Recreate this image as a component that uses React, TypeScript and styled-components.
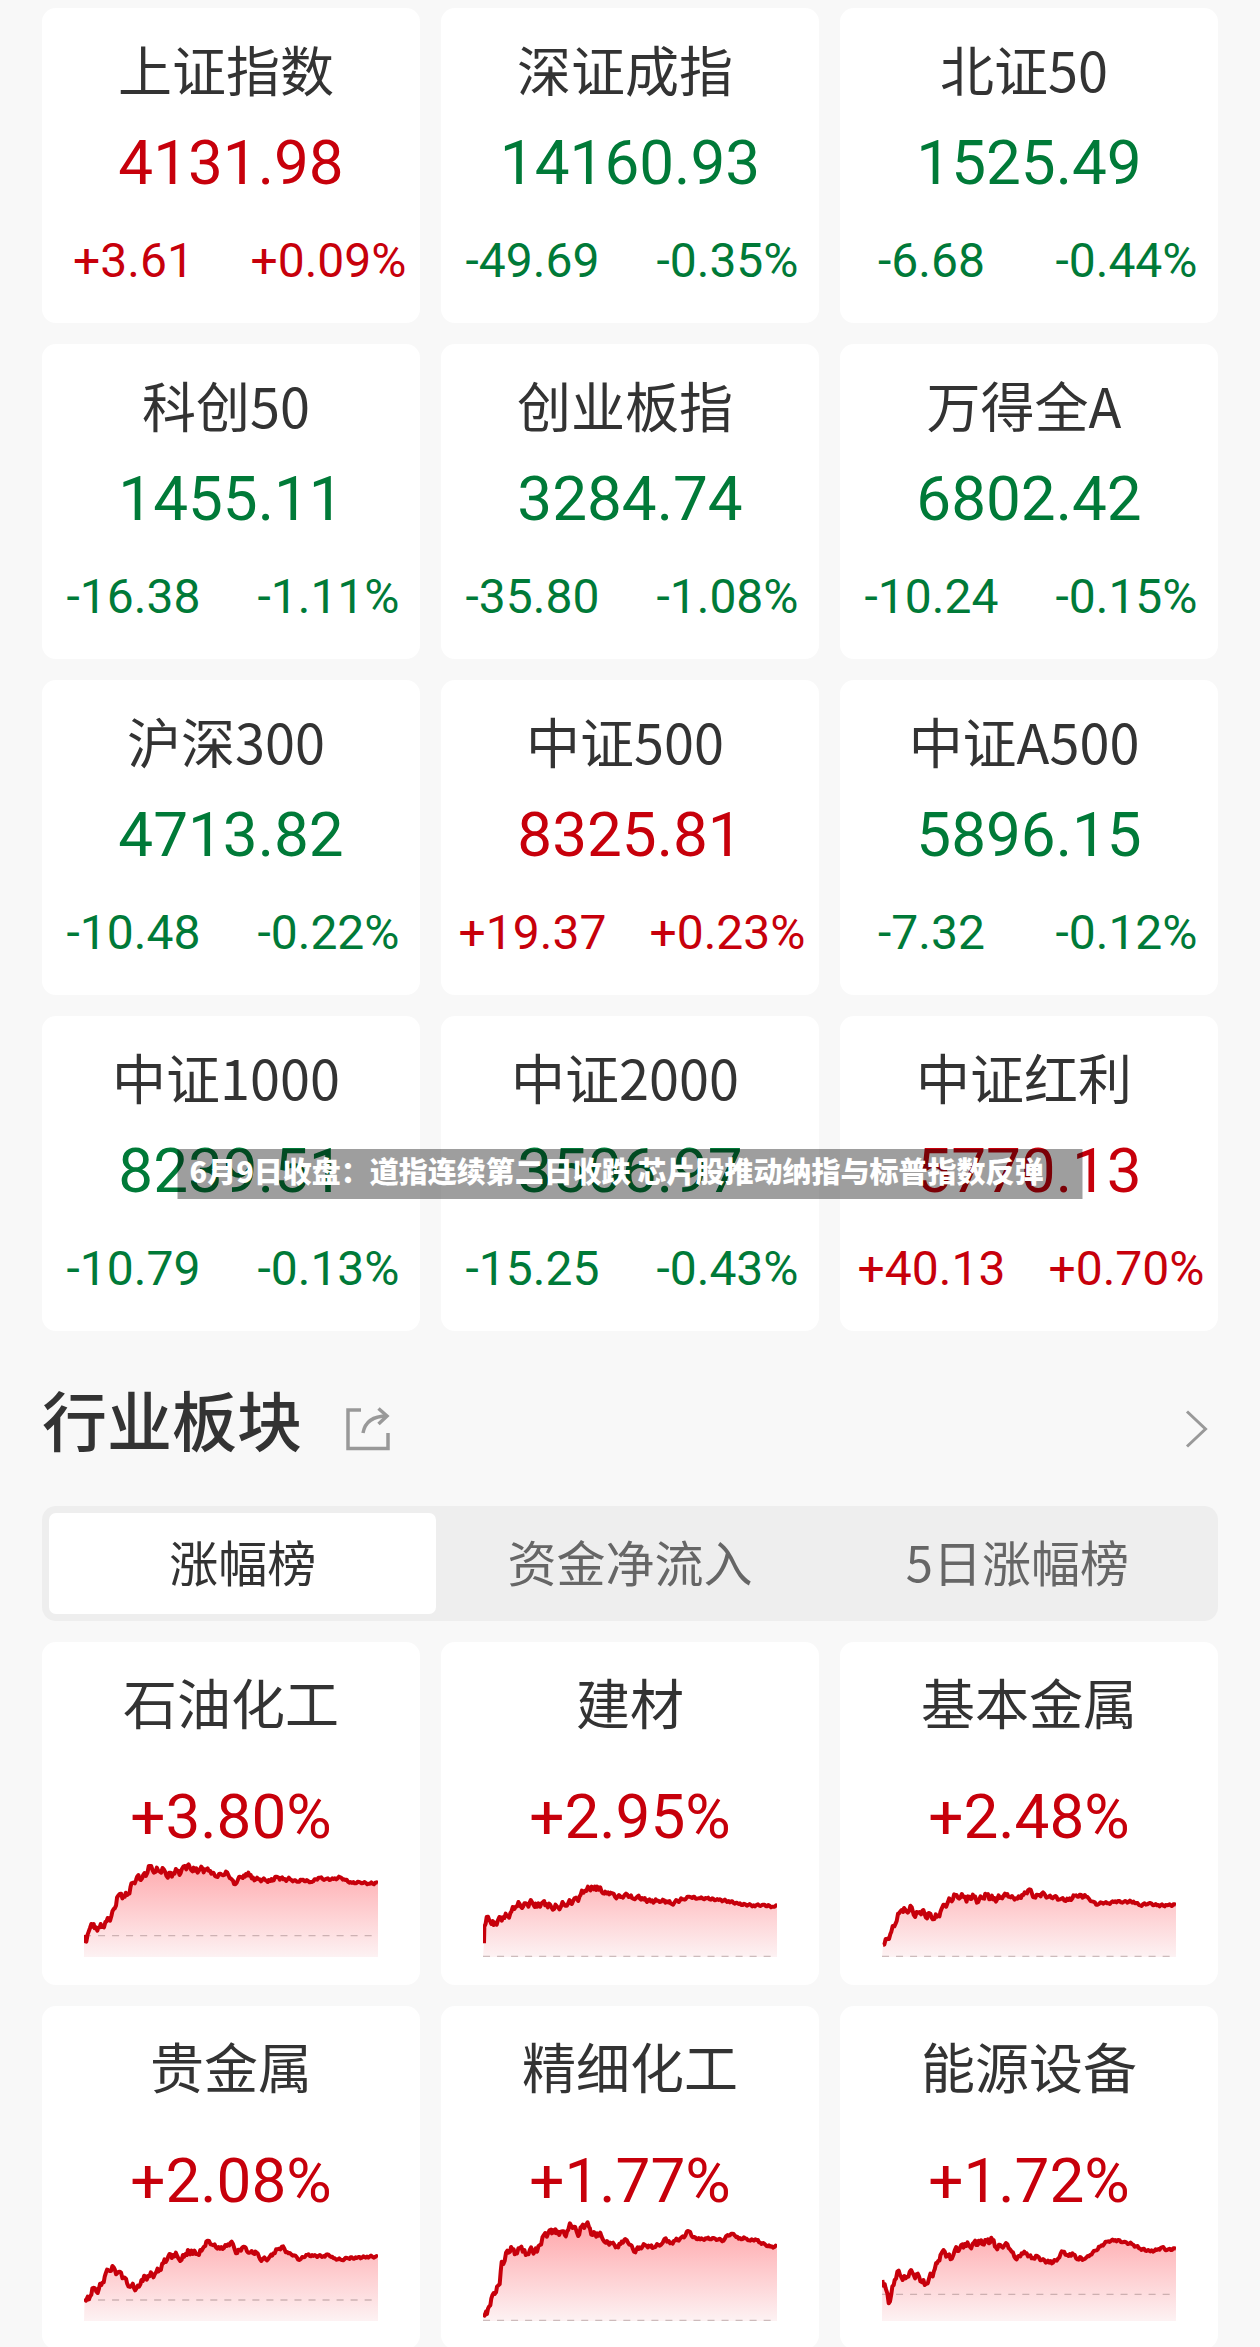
import React, { useId, useState } from "react";
import styled, { createGlobalStyle } from "styled-components";

const RED = "#c7000b";
const GREEN = "#007a38";
const CJK = '"Noto Sans CJK SC", sans-serif';
const NUMERIC = 'Roboto, "Noto Sans CJK SC", sans-serif';

const GlobalStyle = createGlobalStyle`
  * { box-sizing: border-box; }
  body { margin: 0; background: #f8f8f8; }
  h2, h3, p { margin: 0; font-weight: 400; }
  button { border: 0; margin: 0; padding: 0; background: none; cursor: pointer; }
`;

const Screen = styled.main`
  position: relative;
  height: 100vh;
  overflow: hidden;
  padding: 8px 42px 0;
  background: #f8f8f8;
  color: #333;
  font-family: ${CJK};
`;

const CardGrid = styled.div`
  display: grid;
  grid-template-columns: repeat(3, minmax(0, 1fr));
  gap: 21px;
`;

const Card = styled.article`
  display: flex;
  flex-direction: column;
  border-radius: 14px;
  background: #fff;
  text-align: center;
`;

const IndexCard = styled(Card)`
  padding: 23px 0 34px;
`;

const SectorCard = styled(Card)`
  padding: 22px 42px 28px;
`;

const CardTitle = styled.h3`
  font-size: 54px;
  line-height: 76px;
  white-space: nowrap;
`;

const IndexTitle = styled(CardTitle)`
  padding-right: 10px;
`;

const Figure = styled.p<{ $up: boolean }>`
  color: ${(p) => (p.$up ? RED : GREEN)};
  font-family: ${NUMERIC};
  font-size: 62px;
  line-height: 72px;
  white-space: nowrap;
`;

const IndexFigure = styled(Figure)`
  margin-top: 20px;
`;

const SectorFigure = styled(Figure)`
  margin-top: 41px;
`;

const Changes = styled.div<{ $up: boolean }>`
  display: grid;
  grid-template-columns: repeat(2, minmax(0, 1fr));
  column-gap: 12px;
  margin-top: 34px;
  color: ${(p) => (p.$up ? RED : GREEN)};
  font-family: ${NUMERIC};
  font-size: 48px;
  line-height: 56px;
  white-space: nowrap;
`;

const Change = styled.span`
  display: flex;
  justify-content: center;
`;

const SectionHeader = styled.header`
  display: flex;
  align-items: flex-end;
  gap: 44px;
  padding: 40px 9px 41px 0;
`;

const SectionTitle = styled.h2`
  font-size: 65px;
  font-weight: 500;
  line-height: 94px;
`;

const IconButton = styled.button`
  display: flex;
  align-items: center;
  height: 72px;
  color: #999;
`;

const MoreButton = styled(IconButton)`
  margin-left: auto;
`;

const TabBar = styled.div`
  display: grid;
  grid-template-columns: repeat(3, minmax(0, 1fr));
  margin-bottom: 21px;
  padding: 7px;
  border-radius: 14px;
  background: #eee;
`;

const Tab = styled.button<{ $active: boolean }>`
  height: 101px;
  padding-bottom: 6px;
  border-radius: 7px;
  background: ${(p) => (p.$active ? "#fff" : "transparent")};
  color: ${(p) => (p.$active ? "#333" : "#666")};
  font-family: ${CJK};
  font-size: 49px;
  line-height: 72px;
  white-space: nowrap;
`;

const ChartSvg = styled.svg`
  display: block;
  width: 100%;
  height: 104px;
`;

const Headline = styled.p`
  position: absolute;
  top: 50%;
  left: 50%;
  width: 905px;
  padding: 0 12px 8px;
  transform: translate(-50%, -50%);
  background: rgba(0, 0, 0, 0.38);
  color: #fff;
  font-size: 29px;
  font-weight: 900;
  line-height: 42px;
  white-space: nowrap;
`;

const INDICES = [
  ["上证指数", "4131.98", "+3.61", "+0.09%"],
  ["深证成指", "14160.93", "-49.69", "-0.35%"],
  ["北证50", "1525.49", "-6.68", "-0.44%"],
  ["科创50", "1455.11", "-16.38", "-1.11%"],
  ["创业板指", "3284.74", "-35.80", "-1.08%"],
  ["万得全A", "6802.42", "-10.24", "-0.15%"],
  ["沪深300", "4713.82", "-10.48", "-0.22%"],
  ["中证500", "8325.81", "+19.37", "+0.23%"],
  ["中证A500", "5896.15", "-7.32", "-0.12%"],
  ["中证1000", "8239.51", "-10.79", "-0.13%"],
  ["中证2000", "3506.97", "-15.25", "-0.43%"],
  ["中证红利", "5770.13", "+40.13", "+0.70%"],
];

const TABS = ["涨幅榜", "资金净流入", "5日涨幅榜"];

type Sector = { name: string; change: string; base: number; series: string };

// Each series is a list of "x,y" pairs on an 880 x 312 canvas; base is the previous close.
const SECTORS: Sector[] = [
  {
    name: "石油化工",
    change: "+3.80%",
    base: 248,
    series:
      "0,246 7,266 14,236 22,213 32,226 47,223 57,219 67,206 74,201 82,189 92,166 99,133 107,123 122,131 132,123 139,103 149,89 159,71 167,79 177,66 185,69 194,39 205,51 222,53 239,49 247,69 267,61 282,53 289,61 302,39 317,43 332,53 347,49 362,49 377,53 392,69 412,65 429,59 439,76 449,93 457,89 467,71 482,71 492,59 502,76 522,79 542,81 557,84 579,72 597,79 617,79 637,86 652,81 682,87 702,74 722,79 747,78 767,73 782,81 802,90 827,88 852,92 880,90",
  },
  {
    name: "建材",
    change: "+2.95%",
    base: 310,
    series:
      "3,271 4,221 15,191 22,206 32,216 45,201 60,193 75,189 85,176 98,161 110,153 120,161 132,153 147,148 162,161 175,151 190,153 205,163 225,163 242,153 255,151 270,143 282,139 292,126 305,113 318,109 325,101 332,109 342,101 355,116 370,121 382,119 395,131 415,131 432,125 450,137 462,131 480,139 502,145 525,143 550,145 565,153 582,143 600,139 618,131 645,136 670,136 705,141 735,144 765,153 810,157 835,156 870,161 880,160",
  },
  {
    name: "基本金属",
    change: "+2.48%",
    base: 310,
    series:
      "3,276 18,256 28,236 41,211 51,181 59,171 73,175 89,163 95,186 108,179 121,173 131,193 138,181 148,193 165,191 175,176 188,156 205,141 223,126 235,133 248,131 253,146 261,131 275,133 288,147 298,133 313,126 333,139 353,135 375,123 385,133 405,137 423,126 441,109 455,133 471,126 485,121 495,133 515,131 533,139 558,141 581,127 611,131 628,145 645,155 658,149 678,151 698,145 723,147 753,146 773,157 798,151 823,157 853,157 880,156",
  },
  {
    name: "贵金属",
    change: "+2.08%",
    base: 249,
    series:
      "2,244 15,247 25,214 37,224 52,204 62,179 72,159 89,151 99,169 107,164 119,181 129,199 142,207 157,214 165,209 172,189 192,177 212,171 227,157 237,139 252,119 267,114 279,117 292,129 304,111 322,101 335,111 352,101 359,89 370,71 387,85 407,95 427,87 442,74 455,109 477,89 495,107 517,107 527,127 552,125 567,109 579,97 592,89 612,109 629,115 645,129 665,114 687,117 717,117 732,113 747,124 772,129 787,123 817,123 847,119 880,120",
  },
  {
    name: "精细化工",
    change: "+1.77%",
    base: 310,
    series:
      "2,289 12,291 18,269 25,244 35,231 42,209 50,201 56,134 65,131 73,101 88,97 102,109 115,89 128,114 140,99 162,104 170,84 182,54 195,49 210,39 220,49 232,44 245,54 255,39 260,19 272,29 285,57 295,29 310,21 320,34 328,54 342,49 355,59 367,77 385,79 405,91 415,74 430,69 442,84 452,104 470,91 485,84 500,89 512,91 525,84 538,77 547,64 560,79 575,71 590,65 602,61 610,44 620,45 628,61 650,67 670,65 695,65 720,71 732,54 750,51 765,65 785,64 800,71 815,67 830,77 845,83 860,89 880,89",
  },
  {
    name: "能源设备",
    change: "+1.72%",
    base: 232,
    series:
      "1,189 11,214 20,259 28,231 38,189 46,164 58,181 71,184 83,164 95,174 111,179 128,204 141,184 155,164 165,139 175,114 188,104 205,127 218,99 233,94 248,81 263,89 275,77 293,79 313,74 331,69 341,91 358,89 375,81 388,104 403,127 418,109 433,109 448,124 465,117 478,129 501,137 523,131 535,109 545,104 558,117 570,109 581,124 608,125 623,114 638,101 653,89 673,74 698,69 723,75 748,81 773,95 803,103 823,99 838,91 853,99 880,95",
  },
];

// Adds the tick-by-tick jitter between the main points; it calms down through the session.
function withTicks(series: string) {
  const points = series.split(" ").map((pair) => pair.split(",").map(Number));
  const out: string[] = [];
  points.forEach(([x, y], i) => {
    out.push(`${x},${y}`);
    const next = points[i + 1];
    if (!next) return;
    const steps = Math.max(1, Math.round((next[0] - x) / 4));
    const size = x < 350 ? 9 : x < 600 ? 5 : 3;
    for (let s = 1; s < steps; s++) {
      const t = s / steps;
      const jitter = Math.sin((x + s * 5) * 12.9) * size;
      out.push(`${Math.round(x + (next[0] - x) * t)},${Math.round(y + (next[1] - y) * t + jitter)}`);
    }
  });
  return out.join(" ");
}

function Sparkline({ series, base, label }: { series: string; base: number; label: string }) {
  const id = useId();
  const line = withTicks(series);
  return (
    <ChartSvg viewBox="0 0 880 312" preserveAspectRatio="none" role="img" aria-label={label}>
      <defs>
        <linearGradient id={id} gradientUnits="userSpaceOnUse" x1="0" y1="20" x2="0" y2="312">
          <stop offset="0" stopColor="#ffa6aa" />
          <stop offset="1" stopColor="#fdf2f3" />
        </linearGradient>
      </defs>
      <polygon points={`0,312 ${line} 880,312`} fill={`url(#${id})`} />
      <line x1="0" y1={base} x2="880" y2={base} stroke="#8a7070" strokeOpacity="0.42" strokeWidth="4" strokeDasharray="21 21" />
      <polyline points={line} fill="none" stroke={RED} strokeWidth="12" strokeLinejoin="round" />
    </ChartSvg>
  );
}

function ShareIcon() {
  return (
    <svg width="44" height="44" viewBox="0 0 44 44" fill="none" stroke="currentColor" strokeWidth="3.5" aria-hidden="true">
      <path d="M15 3H2V41.500H42V26" />
      <path d="M17 26C19 15 26 9 41 9" />
      <path d="M32.500 1.500L41 9L32.500 17" />
    </svg>
  );
}

function ChevronIcon() {
  return (
    <svg width="24" height="40" viewBox="0 0 24 40" fill="none" stroke="currentColor" strokeWidth="3" aria-hidden="true">
      <path d="M2 2.500L20.500 20L2 37.500" />
    </svg>
  );
}

export default function App() {
  const [active, setActive] = useState(0);
  return (
    <Screen lang="zh-CN">
      <GlobalStyle />
      <CardGrid>
        {INDICES.map(([name, value, delta, percent]) => {
          const up = delta.startsWith("+");
          return (
            <IndexCard key={name}>
              <IndexTitle>{name}</IndexTitle>
              <IndexFigure $up={up}>{value}</IndexFigure>
              <Changes $up={up}>
                <Change>{delta}</Change>
                <Change>{percent}</Change>
              </Changes>
            </IndexCard>
          );
        })}
      </CardGrid>

      <SectionHeader>
        <SectionTitle>行业板块</SectionTitle>
        <IconButton type="button" aria-label="分享">
          <ShareIcon />
        </IconButton>
        <MoreButton type="button" aria-label="更多">
          <ChevronIcon />
        </MoreButton>
      </SectionHeader>

      <TabBar role="tablist">
        {TABS.map((name, i) => (
          <Tab key={name} type="button" role="tab" aria-selected={i === active} $active={i === active} onClick={() => setActive(i)}>
            {name}
          </Tab>
        ))}
      </TabBar>

      <CardGrid>
        {SECTORS.map((sector) => (
          <SectorCard key={sector.name}>
            <CardTitle>{sector.name}</CardTitle>
            <SectorFigure $up>{sector.change}</SectorFigure>
            <Sparkline series={sector.series} base={sector.base} label={sector.name} />
          </SectorCard>
        ))}
      </CardGrid>

      <Headline>6月9日收盘：道指连续第二日收跌 芯片股推动纳指与标普指数反弹</Headline>
    </Screen>
  );
}
